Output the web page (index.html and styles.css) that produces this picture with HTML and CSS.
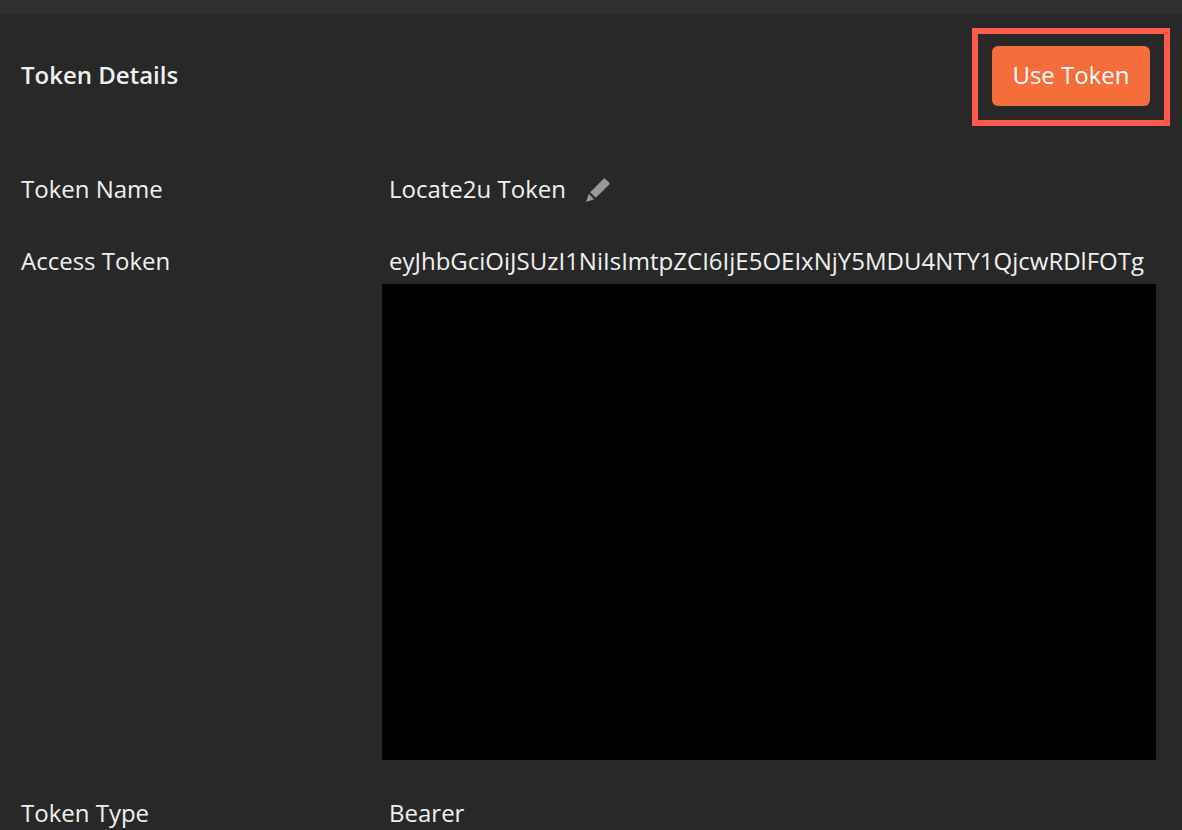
FILE: index.html
```
<!DOCTYPE html>
<html lang="en">
<head>
  <meta charset="UTF-8" />
  <meta name="viewport" content="width=device-width, initial-scale=1.0"/>
  <title>Token Details</title>
  <link rel="stylesheet" href="styles.css">
</head>
<body>

<main class="panel">
  <header class="panel-header">
    <h1>Token Details</h1>
    <div class="highlight">
      <button class="btn" type="button">Use Token</button>
    </div>
  </header>

  <dl class="details">
    <div class="row">
      <dt>Token Name</dt>
      <dd class="name">
        <span>Locate2u Token</span>
        <button class="edit" type="button" aria-label="Edit token name">
          <svg viewBox="0 0 24 24" width="24" height="24">
            <path d="M4.2 14.2 L17.6 .8 Q18.4 0 19.2 .8 L23.3 4.8 Q24.1 5.6 23.3 6.4 L9.8 19.8 Z"/>
            <path d="M2.8 15.8 L8.2 21.2 L0 24 Z"/>
          </svg>
        </button>
      </dd>
    </div>
    <div class="row">
      <dt>Access Token</dt>
      <dd>
        <span>eyJhbGciOiJSUzI1NiIsImtpZCI6IjE5OEIxNjY5MDU4NTY1QjcwRDlFOTg</span>
        <div class="redacted"></div>
      </dd>
    </div>
    <div class="row">
      <dt>Token Type</dt>
      <dd>Bearer</dd>
    </div>
  </dl>
</main>

</body>
</html>
```
FILE: styles.css
```
* { box-sizing: border-box; }
body {
  font-family: 'Open Sans', sans-serif;
  font-size: 24px;
  line-height: 38px;
  margin: 0;
  background: #282828;
  color: #f0f0f0;
}
.panel {
  height: 100vh;
  overflow: hidden;
  border-top: 14px solid #303030;
  border-bottom: 1px solid #2e2530;
}
.panel-header {
  display: flex;
  justify-content: space-between;
  align-items: center;
  padding: 14px 12px 0 21px;
}
h1 {
  margin: 0 0 4px;
  font-size: 24px;
  font-weight: 600;
}
.highlight {
  border: 6px solid #ff5a4c;
  padding: 12px 14px 14px;
}
.btn {
  display: block;
  min-width: 158px;
  background: #f56d3a;
  border: none;
  border-radius: 6px;
  padding: 10px 20px 12px;
  color: #fff;
  font: inherit;
  cursor: pointer;
}
.details {
  display: flex;
  flex-direction: column;
  gap: 34px;
  margin: 0;
  padding: 44px 26px 0 21px;
}
.row {
  display: grid;
  grid-template-columns: 368px 1fr;
}
dd {
  margin: 0;
  min-width: 0;
}
.name {
  display: flex;
  align-items: center;
  gap: 20px;
}
.edit {
  display: block;
  background: none;
  border: none;
  padding: 2px 0 0;
  line-height: 0;
  cursor: pointer;
}
.edit svg { fill: #999; }
.redacted {
  height: 476px;
  margin: 4px 0 0 -7px;
  background: #000;
}
```
